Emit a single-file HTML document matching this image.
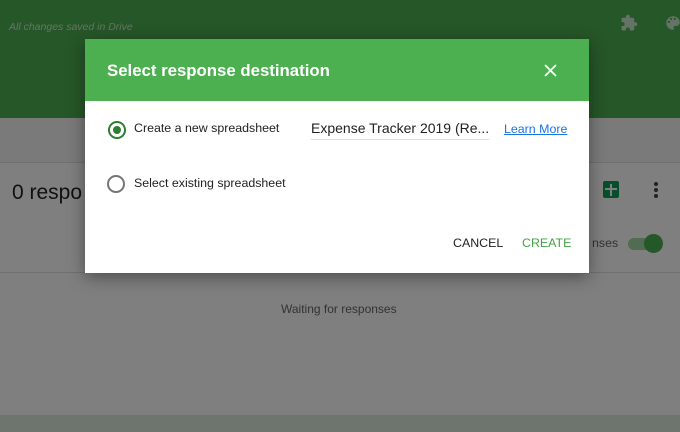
<!DOCTYPE html>
<html><head><style>
body{margin:0;width:680px;height:432px;overflow:hidden;font-family:"Liberation Sans",sans-serif;position:relative;background:#fff}
.hdr{position:absolute;left:0;top:0;width:680px;height:118px;background:#4caf50}
.saved{position:absolute;left:9px;top:21px;font-size:10.5px;font-style:italic;color:#c8e6c9}
.top{position:absolute;top:118px;left:0;width:680px;height:44px;background:#f4f4f4;border-bottom:1px solid #e0e0e0}
.card{position:absolute;top:163px;left:0;width:680px;height:252px;background:#fff}
.line{position:absolute;top:272px;left:0;width:680px;height:1px;background:#e0e0e0}
.bot{position:absolute;top:415px;left:0;width:680px;height:17px;background:#dcebdc}
.ov{position:absolute;left:0;top:0;width:680px;height:432px;background:rgba(0,0,0,.5)}
.dlg{position:absolute;left:85px;top:39px;width:504px;height:234px;background:#fff;box-shadow:0 4px 16px rgba(0,0,0,.4)}
.dh{height:62px;background:#4caf50;color:#fff;font-weight:bold;font-size:16.8px;line-height:64px;padding-left:22px;position:relative}
.radio{position:absolute;width:14px;height:14px;border:2px solid #757575;border-radius:50%}
.t{position:absolute;font-size:12.4px;color:#222}
</style></head><body>
<div class="hdr"></div>
<div class="saved">All changes saved in Drive</div>
<svg style="position:absolute;left:620px;top:14px" width="18" height="18" viewBox="0 0 24 24"><path fill="#fff" fill-opacity=".7" d="M20.5 11H19V7c0-1.1-.9-2-2-2h-4V3.5a2.5 2.5 0 0 0-5 0V5H4c-1.1 0-2 .9-2 2v3.8h1.5c1.5 0 2.7 1.2 2.7 2.7S5 16.2 3.5 16.2H2V20c0 1.1.9 2 2 2h3.8v-1.5c0-1.5 1.2-2.7 2.7-2.7s2.7 1.2 2.7 2.7V22H17c1.1 0 2-.9 2-2v-4h1.5a2.5 2.5 0 0 0 0-5z"/></svg>
<svg style="position:absolute;left:664px;top:14px" width="18" height="18" viewBox="0 0 24 24"><path fill="#fff" fill-opacity=".7" d="M12 3a9 9 0 0 0 0 18c.8 0 1.5-.7 1.5-1.5 0-.4-.1-.7-.4-1-.2-.3-.4-.6-.4-1 0-.8.7-1.5 1.5-1.5H16c2.8 0 5-2.2 5-5 0-4.4-4-8-9-8zm-5.5 9a1.5 1.5 0 1 1 0-3 1.5 1.5 0 0 1 0 3zm3-4a1.5 1.5 0 1 1 0-3 1.5 1.5 0 0 1 0 3zm5 0a1.5 1.5 0 1 1 0-3 1.5 1.5 0 0 1 0 3z"/></svg>
<div class="top"></div>
<div class="card"></div>
<div class="line"></div>
<div class="bot"></div>
<div class="t" style="left:12px;top:181px;font-size:21px;color:#222">0 respo</div>
<div style="position:absolute;left:603px;top:181px;width:16px;height:17px;background:#0f9d58;border-radius:2px"></div>
<div style="position:absolute;left:610px;top:184px;width:2px;height:12px;background:#fff"></div>
<div style="position:absolute;left:605px;top:188px;width:12px;height:2px;background:#fff"></div>
<div style="position:absolute;left:654px;top:182px;width:4px;height:4px;border-radius:50%;background:#444;box-shadow:0 6px 0 #444,0 12px 0 #444"></div>
<div class="t" style="left:592px;top:236px;color:#666">nses</div>
<div style="position:absolute;left:628px;top:238px;width:30px;height:12px;border-radius:6px;background:#a5d6a7"></div>
<div style="position:absolute;left:644px;top:234px;width:19px;height:19px;border-radius:50%;background:#4caf50"></div>
<div class="t" style="left:281px;top:302px;font-size:12px;color:#666">Waiting for responses</div>
<div class="ov"></div>
<div class="dlg">
<div class="dh">Select response destination
<svg style="position:absolute;left:459px;top:25px" width="13" height="13" viewBox="0 0 13 13"><path d="M1 1L12 12M12 1L1 12" stroke="#fff" stroke-width="1.8"/></svg></div>
<div class="radio" style="left:23px;top:82px;border-color:#2e7d32"></div>
<div style="position:absolute;left:28px;top:87px;width:8px;height:8px;border-radius:50%;background:#2e7d32"></div>
<div class="t" style="left:49px;top:82px">Create a new spreadsheet</div>
<div class="t" style="left:226px;top:81px;font-size:14px">Expense Tracker 2019 (Re...</div>
<div style="position:absolute;left:226px;top:100px;width:178px;height:1px;background:#ddd"></div>
<div class="t" style="left:419px;top:83px;color:#1a73e8;text-decoration:underline;font-size:12.4px">Learn More</div>
<div class="radio" style="left:22px;top:136px"></div>
<div class="t" style="left:49px;top:137px">Select existing spreadsheet</div>
<div class="t" style="left:368px;top:197px;font-size:12.4px;color:#222">CANCEL</div>
<div class="t" style="left:437px;top:197px;font-size:12.4px;color:#43a047">CREATE</div>
</div>
</body></html>
